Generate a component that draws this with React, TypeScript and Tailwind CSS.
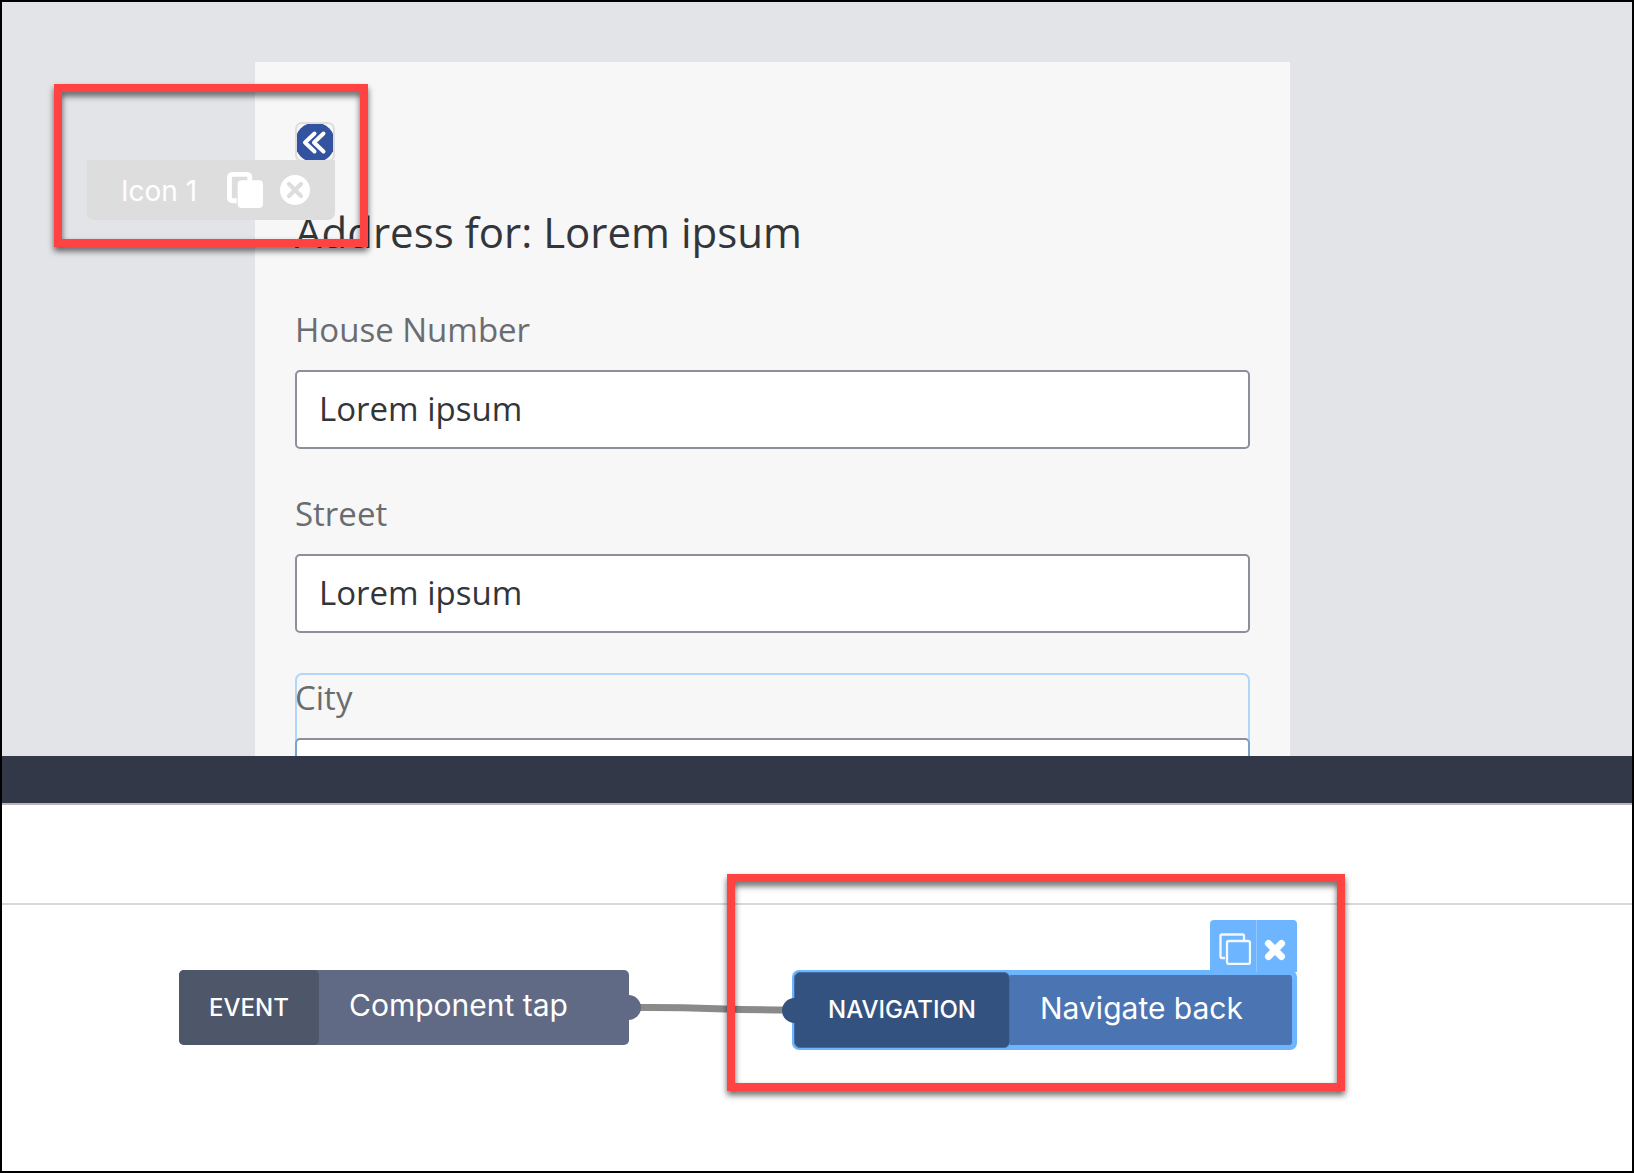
import React from 'react';

function Highlight({ className }: { className: string }) {
  return (
    <div
      aria-hidden="true"
      className={`pointer-events-none absolute z-20 border-8 border-[#ff4343] drop-shadow-[0_4px_3px_rgba(0,0,0,0.6)] ${className}`}
    />
  );
}

function Field({ id, label, value, selected }: { id: string; label: string; value: string; selected?: boolean }) {
  return (
    <div className="relative">
      <label htmlFor={id} className="block text-[33px] leading-[50px] text-[#6a6d70]">
        {label}
      </label>
      <input
        id={id}
        type="text"
        defaultValue={value}
        className="mt-[15px] block h-[79px] w-full rounded-[5px] border-2 border-[#8a8f9b] bg-white px-[22px] pb-0.5 text-[33px] text-[#32363a] outline-none"
      />
      {selected && (
        <div className="pointer-events-none absolute inset-0 rounded-[7px] border-2 border-[#6cb4ff]/50" />
      )}
    </div>
  );
}

function IconComponent() {
  return (
    <div className="relative h-10 w-10">
      <button
        type="button"
        aria-label="Back"
        className="block h-10 w-10 overflow-hidden rounded-[7px] border-2 border-[#dddddd] bg-[#f7f7f7]"
      >
        <svg viewBox="0 0 36 36" className="block h-9 w-9" fill="none">
          <circle cx="18" cy="18.500" r="20" fill="#3353a0" />
          <path
            d="M17.500 9.500 8 18.500l9.500 9M26.500 9.500 17 18.500l9.500 9"
            stroke="#fff"
            strokeWidth="4"
            strokeLinecap="round"
            strokeLinejoin="round"
          />
        </svg>
      </button>
      <div className="absolute top-[38px] right-0 z-10 flex h-[60px] w-[248px] items-center rounded-b-[7px] bg-[#dddddd] pr-[25px] pl-[34px] text-white">
        <span className="mr-auto pt-0.5 whitespace-nowrap font-['Inter',sans-serif] text-[28px] leading-[40px]">
          Icon 1
        </span>
        <button type="button" aria-label="Duplicate">
          <svg viewBox="0 0 37 37" className="block h-9 w-9" fill="none">
            <path
              d="M10 29.500H6Q2.500 29.500 2.500 26V6Q2.500 2.500 6 2.500H20Q23.500 2.500 23.500 6V9"
              stroke="#fff"
              strokeWidth="5"
            />
            <rect x="11" y="8.500" width="26" height="28.500" rx="4" fill="#fff" />
          </svg>
        </button>
        <button type="button" aria-label="Remove" className="ml-[17px]">
          <svg viewBox="0 0 30 30" className="block h-[30px] w-[30px]" fill="none">
            <circle cx="15" cy="15" r="15" fill="#fff" />
            <path d="m9 9 12 12m0-12L9 21" stroke="#dddddd" strokeWidth="4.200" strokeLinecap="round" />
          </svg>
        </button>
      </div>
      <Highlight className="-top-[38px] -left-[241px] h-[163px] w-[314px]" />
    </div>
  );
}

export default function App() {
  return (
    <div className="flex h-screen flex-col border-2 border-black bg-white">
      <main className="min-h-0 flex-1 overflow-hidden bg-[#e3e4e8] pt-[60px] pr-[342px] pl-[253px] font-['Open_Sans',sans-serif]">
        <form className="min-h-full bg-[#f7f7f7] px-10 pt-[60px]">
          <IconComponent />
          <h1 className="mt-[42px] text-[42px] leading-[56px] whitespace-nowrap text-[#32363a]">
            Address for: Lorem ipsum
          </h1>
          <div className="mt-[45px] flex flex-col gap-10">
            <Field id="house" label="House Number" value="Lorem ipsum" />
            <Field id="street" label="Street" value="Lorem ipsum" />
            <Field id="city" label="City" value="" selected />
          </div>
        </form>
      </main>

      <div className="h-[49px] shrink-0 border-b-2 border-[#b6b7bd] bg-[#333848]" />

      <section className="shrink-0 font-['Inter',sans-serif] text-white">
        <div className="h-[100px] border-b-2 border-[#d8d9dd]" />
        <div className="flex items-start pt-[65px] pb-[121px] pl-[177px]">
          <div className="relative flex h-[75px] w-[450px] rounded-[5px] bg-[#616a84]">
            <div className="flex w-[140px] items-center justify-center rounded-[5px] bg-[#4e566a] text-[24px] font-medium">
              EVENT
            </div>
            <div className="flex items-center pb-1 pl-[30px] text-[30px] whitespace-nowrap">Component tap</div>
            <span className="absolute top-[25px] -right-3 h-[25px] w-[25px] rounded-full bg-[#616a84]" />
          </div>

          <svg viewBox="0 0 163 75" className="h-[75px] w-[163px] shrink-0 overflow-visible" fill="none">
            <path d="M10 37.500C80 37 90 40 160 40" stroke="#8a8a8a" strokeWidth="7" />
          </svg>

          <div className="relative flex h-20 w-[505px] rounded-[7px] bg-[#6eb5ff]">
            <div className="relative my-[2px] ml-[2px] flex w-[216px] items-center justify-center rounded-[6px] border border-[#426da5] bg-[#345280] text-[24px] font-medium">
              NAVIGATION
              <span className="absolute top-[25px] -left-[13px] h-[25px] w-[25px] rounded-full bg-[#345280]" />
            </div>
            <div className="my-[5px] mr-[5px] flex flex-1 items-center rounded-r-[3px] bg-[#4b74b2] pb-1 pl-[30px] text-[30px] whitespace-nowrap">
              Navigate back
            </div>
            <div className="absolute right-0 bottom-[78px] flex h-[52px] w-[87px] rounded-t-[4px] bg-[#6eb5ff]">
              <button
                type="button"
                aria-label="Duplicate action"
                className="flex w-[47px] items-center justify-center border-r border-[#92c8ff] pt-[5px] pl-1"
              >
                <svg viewBox="0 0 32 32" className="h-8 w-8" fill="none" stroke="#f3f9ff" strokeWidth="2.300">
                  <path d="M6 25H3Q1.500 25 1.500 23.500V3Q1.500 1.500 3 1.500H23.500Q25 1.500 25 3V7" />
                  <rect x="8" y="8" width="23" height="23" rx="2" />
                </svg>
              </button>
              <button type="button" aria-label="Remove action" className="flex flex-1 items-center justify-center pt-2 pr-1">
                <svg viewBox="0 0 22 22" className="h-[22px] w-[22px]" fill="none">
                  <path d="m4.500 4.500 13 13m0-13-13 13" stroke="#fff" strokeWidth="7" strokeLinecap="round" />
                </svg>
              </button>
            </div>
            <Highlight className="-top-[96px] -left-[65px] h-[217px] w-[618px]" />
          </div>
        </div>
      </section>
    </div>
  );
}
